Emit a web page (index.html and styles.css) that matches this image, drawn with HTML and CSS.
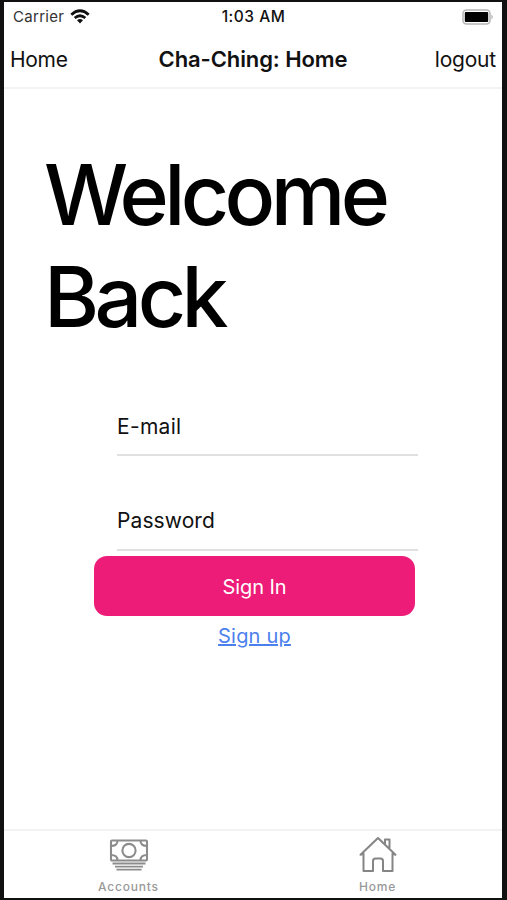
FILE: index.html
```html
<!DOCTYPE html>
<html lang="en">
<head>
<meta charset="utf-8">
<title>Cha-Ching: Home</title>
<link rel="stylesheet" href="styles.css">
</head>
<body>
<div class="screen">
  <div class="status">
    <div class="carrier"><span>Carrier</span>
      <svg class="wifi" viewBox="0 0 20 15" fill="none" stroke="#111" stroke-width="2.8"><path d="M1.3 5.7Q10-2.1 18.7 5.7M4.7 9Q10 4.6 15.3 9"/><path d="M10 14.5 7 11.3Q10 8.9 13 11.3Z" fill="#111" stroke="none"/></svg>
    </div>
    <time class="clock">1:03 AM</time>
    <svg class="battery" viewBox="0 0 32 16"><rect x="1" y="1" width="27" height="14" rx="3.5" fill="#fff" stroke="#b5b5b5" stroke-width="1.5"/><rect x="2.8" y="3" width="23.4" height="10" rx="1" fill="#000"/><path d="M29.5 5.5Q32 8 29.5 10.5Z" fill="#aaa"/></svg>
  </div>
  <header class="nav">
    <span class="nav-home">Home</span>
    <span class="nav-title">Cha-Ching: Home</span>
    <span class="nav-logout">logout</span>
  </header>
  <main class="content">
    <h1>Welcome<br>Back</h1>
    <form class="form">
      <div class="field email">E-mail</div>
      <div class="field password">Password</div>
      <button class="signin" type="button"><span>Sign In</span></button>
      <a class="signup">Sign up</a>
    </form>
  </main>
  <footer class="tabs">
    <div class="tab accounts">
      <svg viewBox="0 0 40 36" fill="none" stroke="#8c8c8c" stroke-width="2.1"><rect x="2" y="2.5" width="36" height="20" rx="1"/><circle cx="20" cy="12.5" r="6.6"/><path d="M8.5 2.5Q8.5 8 2 8M31.5 2.5Q31.5 8 38 8M8.5 22.5Q8.5 17 2 17M31.5 22.5Q31.5 17 38 17"/><path d="M3.5 25.5H36.5M6 28.6H34M7.5 31.6H32.5" stroke-width="1.9"/></svg>
      <span>Accounts</span>
    </div>
    <div class="tab home">
      <svg viewBox="0 0 40 38" fill="none" stroke="#858585" stroke-width="2" stroke-linejoin="round" stroke-linecap="round"><path d="M5.5 17.5 2.5 18.8 20 2 37.5 18.8 34.5 17.5V35H25V25Q25 22.5 22.5 22.5H17.5Q15 22.5 15 25V35H5.5V17.5M27 8V3.5H31.5V12"/></svg>
      <span>Home</span>
    </div>
  </footer>
</div>
</body>
</html>
```
FILE: styles.css
```css
* { box-sizing: border-box; }
body { margin: 0; width: 507px; height: 900px; background: #111; font-family: Inter, "Liberation Sans", sans-serif; color: #111; }
.screen { width: 507px; height: 900px; border: solid #111; border-width: 2px 5px 2px 4px; background: #fff; display: flex; flex-direction: column; }
.status { height: 29px; display: grid; grid-template-columns: 1fr auto 1fr; align-items: center; padding: 0 8px 0 9px; }
.carrier { display: flex; align-items: center; gap: 6px; font-size: 15px; letter-spacing: .3px; color: #333; }
.wifi { width: 20px; height: 15px; }
.clock { font-size: 15.5px; font-weight: 500; letter-spacing: .5px; }
.battery { width: 32px; height: 16px; justify-self: end; }
.nav { height: 58px; border-bottom: 2px solid #f3f3f3; display: grid; grid-template-columns: 1fr auto 1fr; align-items: center; padding: 0 6px; font-size: 21px; letter-spacing: -.3px; }
.nav-title { font-weight: 600; font-size: 22px; letter-spacing: -.1px; }
.nav-logout { justify-self: end; letter-spacing: -.2px; }
.content { flex: 1; }
h1 { margin: 55px 0 0 40px; font-size: 84px; line-height: 102px; font-weight: 500; letter-spacing: -4.6px; color: #000; }
.form { margin: 52px 0 0 90px; width: 324px; display: flex; flex-direction: column; }
.field { margin-left: 23px; width: 301px; border-bottom: 2px solid #e0e0e0; font-size: 21px; line-height: 26px; }
.email { height: 56px; padding-top: 14px; letter-spacing: .3px; }
.password { height: 95px; padding-top: 52px; letter-spacing: .1px; }
.signin { margin: 5px 0 0; width: 321px; height: 60px; border: 0; border-radius: 13px; background: #ed1c79; color: #fff; font: 400 20px Inter, sans-serif; padding-top: 3px; letter-spacing: -.1px; }
.signup { width: 321px; margin-top: 7px; text-align: center; color: #4c7fee; font-size: 20px; line-height: 26px; letter-spacing: .2px; text-decoration: underline; }
.tabs { height: 69px; border-top: 2px solid #f2f2f2; display: grid; grid-template-columns: 1fr 1fr; }
.tab { display: flex; flex-direction: column; align-items: center; color: #999; font-size: 12px; font-weight: 500; line-height: 16px; letter-spacing: .8px; }
.tab svg { width: 40px; height: 36px; margin: 7px 0 5px; }
.tab.home svg { height: 38px; margin: 5px 0; }
```
